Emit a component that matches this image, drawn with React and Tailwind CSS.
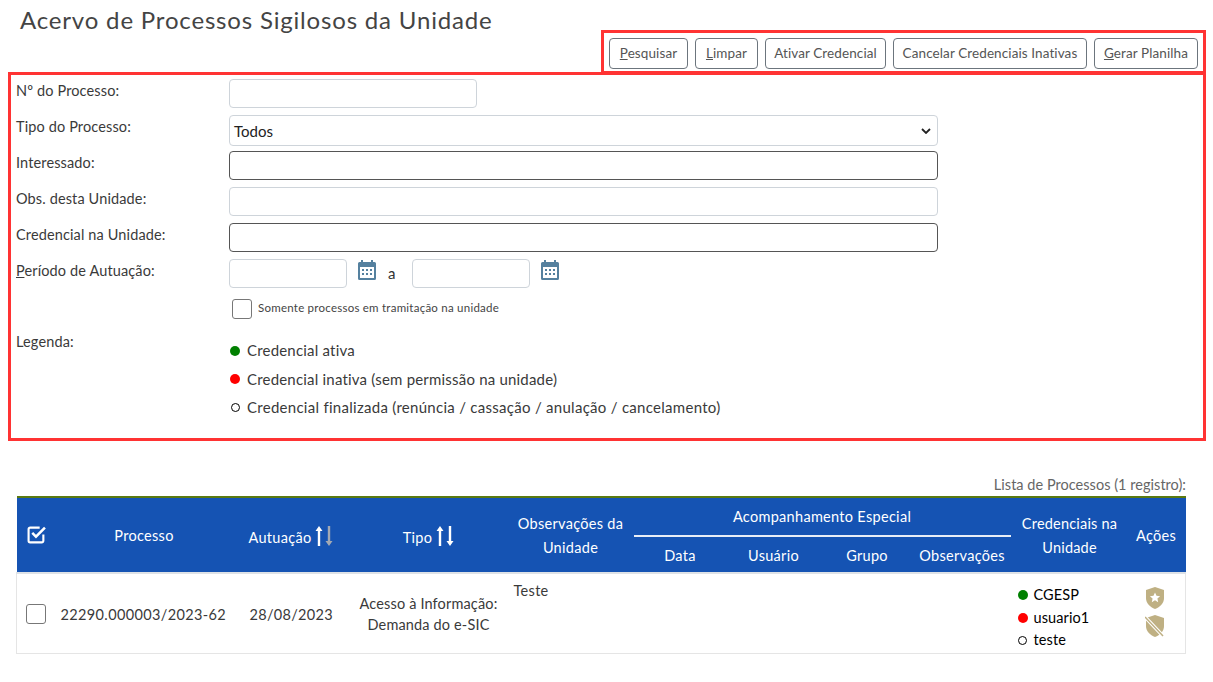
const font = "[font-family:Lato,'Open_Sans',sans-serif]";

function Btn({ u, rest, cls }) {
  return (
    <button className={`h-[31px] border border-[#6c757d] rounded-[4px] bg-white text-[13.5px] text-[#555] tracking-[0.1px] whitespace-nowrap ${cls || ""}`}>
      {u && <span className="underline">{u}</span>}{rest}
    </button>
  );
}

function Row({ label, u, h, children, top }) {
  return (
    <div className={`flex ${h}`}>
      <div className={`w-[218px] shrink-0 pl-[5px] text-[14.5px] text-[#3a3a3a] tracking-[0.13px] ${top || "pt-[1px]"}`}>
        {u && <span className="underline">{u}</span>}{label}
      </div>
      <div className="flex-1 flex items-start">{children}</div>
    </div>
  );
}

const light = "h-[29px] border border-[#ced4da] rounded-[4px] bg-white";
const dark = "h-[29px] w-[709px] border border-[#555] rounded-[4px] bg-white";

function Calendar() {
  return (
    <svg width="18" height="20" viewBox="0 0 18 20" className="shrink-0">
      <path fill="#55819f" d="M3 0h2v2h8V0h2v2h1.500A1.500 1.500 0 0 1 18 3.500v15a1.500 1.500 0 0 1-1.500 1.500h-15A1.500 1.500 0 0 1 0 18.500v-15A1.500 1.500 0 0 1 1.500 2H3z" />
      <rect x="2" y="7" width="14" height="11" fill="#fff" />
      <g fill="#55819f">
        <rect x="4" y="9" width="2" height="2" /><rect x="8" y="9" width="2" height="2" /><rect x="12" y="9" width="2" height="2" />
        <rect x="4" y="13" width="2" height="2" /><rect x="8" y="13" width="2" height="2" /><rect x="12" y="13" width="2" height="2" />
      </g>
    </svg>
  );
}

function Dot({ c }) {
  if (c === "o") return <span className="inline-block w-[9px] h-[9px] ml-[0.5px] mr-[0.5px] rounded-full border border-black bg-white shrink-0" />;
  return <span className={`inline-block w-[10px] h-[10px] rounded-full shrink-0 ${c}`} />;
}

function Arrows({ dim }) {
  return (
    <svg width="18" height="20" viewBox="0 0 18 20" className="inline-block align-[-3px] ml-[4px]">
      <path fill="#fff" d="M4 0l3.500 5H5.200v15H2.800V5H.5z" />
      <path fill={dim ? "#a3a9b3" : "#fff"} d="M14 20l-3.500-5h2.300V0h2.400v15h2.300z" />
    </svg>
  );
}

function Shield({ slash }) {
  return (
    <svg width="20" height="22" viewBox="0 0 20 22">
      <path fill="#bfb083" d="M10 0l9 3v8c0 5.500-4 9-9 11-5-2-9-5.500-9-11V3z" />
      {slash ? (
        <path d="M1 3l17 18" stroke="#fff" strokeWidth="3.500" />
      ) : (
        <path fill="#fff" d="M10 5.500l1.500 3.300 3.600.4-2.700 2.400.8 3.600-3.200-1.900-3.200 1.900.8-3.600-2.700-2.400 3.600-.4z" />
      )}
      {slash && <path d="M0 2l18 19" stroke="#bfb083" strokeWidth="1.500" />}
    </svg>
  );
}

export default function App() {
  return (
    <div className={`${font} w-[1213px] h-[682px] bg-white overflow-hidden`}>
      <h1 className="h-[30px] pl-[20px] pt-[4px] text-[24px] leading-[32px] text-[#444] tracking-[0.82px]">
        Acervo de Processos Sigilosos da Unidade
      </h1>

      <div className="flex justify-end pr-[7px]">
        <div className="w-[605px] h-[44px] border-[3px] border-[#ff3333] flex items-center gap-[7px] pl-[5px] pt-[2px]">
          <Btn u="P" rest="esquisar" cls="w-[79px]" />
          <Btn u="L" rest="impar" cls="w-[63px]" />
          <Btn rest="Ativar Credencial" cls="w-[121px]" />
          <Btn rest="Cancelar Credenciais Inativas" cls="w-[194px]" />
          <Btn u="G" rest="erar Planilha" cls="w-[104px]" />
        </div>
      </div>

      <div className="ml-[8px] mr-[7px] -mt-[2px] h-[369px] border-[3px] border-[#ff3333] pt-[4px]">
        <Row label="Nº do Processo:" h="h-[36px]">
          <div className={`${light} w-[248px]`} />
        </Row>
        <Row label="Tipo do Processo:" h="h-[36px]">
          <div className={`${light} w-[709px] h-[31px] flex items-center justify-between pl-[4px] pr-[6px] text-[15px] text-[#222]`}>
            <span className="mt-[1px]">Todos</span>
            <svg width="10" height="6" viewBox="0 0 10 6"><path d="M1 1l4 4 4-4" fill="none" stroke="#222" strokeWidth="1.800" /></svg>
          </div>
        </Row>
        <Row label="Interessado:" h="h-[36px]"><div className={dark} /></Row>
        <Row label="Obs. desta Unidade:" h="h-[36px]"><div className={`${light} w-[709px]`} /></Row>
        <Row label="Credencial na Unidade:" h="h-[36px]"><div className={dark} /></Row>
        <Row u="P" label="eríodo de Autuação:" h="h-[40px]">
          <div className={`${light} w-[118px]`} />
          <div className="ml-[11px] mt-[1px]"><Calendar /></div>
          <span className="ml-[12px] mt-[3px] text-[15px] text-[#333]">a</span>
          <div className={`${light} w-[118px] ml-[17px]`} />
          <div className="ml-[11px] mt-[1px]"><Calendar /></div>
        </Row>
        <Row label="" h="h-[36px]">
          <div className="ml-[3px] flex items-center gap-[6px]">
            <div className="w-[20px] h-[20px] border border-[#777] rounded-[3px] bg-white" />
            <span className="text-[11.5px] text-[#444] tracking-[0.24px] -mt-[2px]">Somente processos em tramitação na unidade</span>
          </div>
        </Row>
        <Row label="Legenda:" h="h-[92px]" top="-mt-[4px]">
          <div className="flex flex-col text-[15px] text-[#3a3a3a] tracking-[0.2px] pl-[1px]">
            <div className="h-[29px] flex items-center gap-[7px] mt-[1px]"><Dot c="bg-[#008000]" /><span>Credencial ativa</span></div>
            <div className="h-[28px] flex items-center gap-[7px]"><Dot c="bg-[#ff0000]" /><span>Credencial inativa (sem permissão na unidade)</span></div>
            <div className="h-[28px] flex items-center gap-[7px]"><Dot c="o" /><span className="tracking-[0.28px]">Credencial finalizada (renúncia / cassação / anulação / cancelamento)</span></div>
          </div>
        </Row>
      </div>

      <div className="ml-[16px] w-[1170px] mt-[32px]">
        <div className="h-[23px] text-right text-[14.5px] leading-[23px] text-[#666] tracking-[0.03px]">Lista de Processos (1 registro):</div>
        <table className="w-[1169px] table-fixed border-collapse text-[14.5px]">
          <colgroup>
            <col className="w-[39px]" /><col className="w-[178px]" /><col className="w-[110px]" /><col className="w-[150px]" />
            <col className="w-[140px]" /><col className="w-[93px]" /><col className="w-[94px]" /><col className="w-[93px]" /><col className="w-[97px]" />
            <col className="w-[122px]" /><col className="w-[53px]" />
          </colgroup>
          <thead className="bg-[#1553b3] text-white tracking-[0.3px] font-normal">
            <tr className="h-[39px]">
              <th rowSpan="2" className="font-normal border-t-2 border-t-[#5b7a10] pl-[10px] text-left">
                <svg width="19" height="19" viewBox="0 0 18 18" className="-mt-[2px]">
                  <path d="M15.500 9v6a1.500 1.500 0 0 1-1.500 1.500H3A1.500 1.500 0 0 1 1.500 15V4A1.500 1.500 0 0 1 3 2.500h9" fill="none" stroke="#fff" strokeWidth="2" />
                  <path d="M5 7.500l3.500 3.500L17 2.500" fill="none" stroke="#fff" strokeWidth="2.400" />
                </svg>
              </th>
              <th rowSpan="2" className="font-normal border-t-2 border-t-[#5b7a10] pr-[1px] pt-[2px]">Processo</th>
              <th rowSpan="2" className="font-normal border-t-2 border-t-[#5b7a10] text-left pl-[15px] pt-[5px] whitespace-nowrap">Autuação<Arrows dim /></th>
              <th rowSpan="2" className="font-normal border-t-2 border-t-[#5b7a10] pt-[5px] pl-[20px] whitespace-nowrap">Tipo<Arrows /></th>
              <th rowSpan="2" className="font-normal border-t-2 border-t-[#5b7a10] leading-[24px] pl-[14px] pt-[2px]">Observações da Unidade</th>
              <th colSpan="4" className="font-normal border-t-2 border-t-[#5b7a10] border-b-2 border-b-white/90">Acompanhamento Especial</th>
              <th rowSpan="2" className="font-normal border-t-2 border-t-[#5b7a10] leading-[24px] pr-[4px] pt-[2px] tracking-[0.2px]">Credenciais na Unidade</th>
              <th rowSpan="2" className="font-normal border-t-2 border-t-[#5b7a10] pr-[6px] pt-[2px]">Ações</th>
            </tr>
            <tr className="h-[37px]">
              <th className="font-normal pt-[2px]">Data</th>
              <th className="font-normal pt-[2px]">Usuário</th>
              <th className="font-normal pt-[2px]">Grupo</th>
              <th className="font-normal pt-[2px]">Observações</th>
            </tr>
          </thead>
          <tbody className="text-[#3a3a3a] tracking-[0.3px]">
            <tr className="h-[80px] border border-[#e5e5e5] border-t-2 border-t-[#dee2e6]">
              <td className="pl-[9px]"><div className="w-[20px] h-[20px] border border-[#777] rounded-[3px] bg-white mt-[2px]" /></td>
              <td className="pl-[5px] whitespace-nowrap pt-[4px] tracking-[0.36px]">22290.000003/2023-62</td>
              <td className="pl-[16px] pt-[4px]">28/08/2023</td>
              <td className="pl-[16px] pt-[2px] whitespace-nowrap tracking-[0.15px]"><div className="w-[138px] text-center leading-[21px]">Acesso à Informação:<br />Demanda do e-SIC</div></td>
              <td className="align-top pl-[20px] pt-[6px]">Teste</td>
              <td /><td /><td /><td />
              <td className="pl-[7px] text-black align-top pt-[9px] tracking-[0.1px]">
                <div className="flex items-center gap-[6px] h-[23px]"><Dot c="bg-[#008000]" /><span>CGESP</span></div>
                <div className="flex items-center gap-[6px] h-[23px]"><Dot c="bg-[#ff0000]" /><span>usuario1</span></div>
                <div className="flex items-center gap-[6px] h-[22px]"><Dot c="o" /><span>teste</span></div>
              </td>
              <td className="align-top pt-[13px]">
                <div className="flex flex-col items-center gap-[6px] pr-[8px]"><Shield /><Shield slash /></div>
              </td>
            </tr>
          </tbody>
        </table>
      </div>
    </div>
  );
}
